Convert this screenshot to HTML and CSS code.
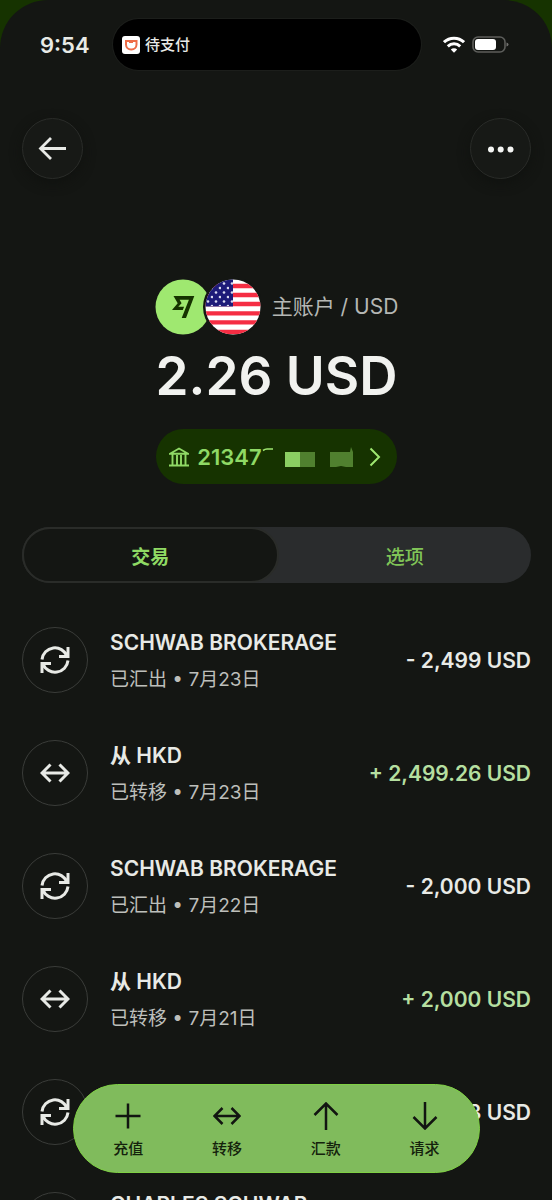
FILE: index.html
```html
<!DOCTYPE html>
<html lang="zh-CN">
<head>
<meta charset="utf-8">
<meta name="viewport" content="width=device-width, initial-scale=1">
<title>主账户 / USD</title>
<link rel="stylesheet" href="styles.css">
</head>
<body>
<svg class="sprite" aria-hidden="true">
  <symbol id="sync" viewBox="0 0 30 30"><path d="M2 14.500A13 13 0 0 1 27 11M28 2v9.500H19M28 15.500A13 13 0 0 1 3 19M2 28V18.500h9"/></symbol>
  <symbol id="swap" viewBox="0 0 30 20"><path d="M2 10h26M10.500 1.500L2 10l8.500 8.500M19.500 1.500L28 10l-8.500 8.500"/></symbol>
</svg>
<div class="app">
  <div class="status">
    <span class="time">9:54</span>
    <div class="island">
      <svg width="18" height="18" viewBox="0 0 18 18"><rect width="18" height="18" rx="3" fill="#fff"/><path d="M4 5h10.500v3.500a5 5 0 0 1-5 5h-.5a5 5 0 0 1-5-5z" fill="none" stroke="#ee6d48" stroke-width="2"/><path d="M7 6.500h4" stroke="#ee6d48" stroke-width="1"/></svg>
      <span>待支付</span>
    </div>
    <div class="signals">
      <svg width="22" height="17" viewBox="0 0 22 17" fill="none" stroke="#fff" stroke-width="3"><path d="M1 6.200a14.500 14.500 0 0 1 20 0"/><path d="M4.800 10.300a9 9 0 0 1 12.400 0"/><path d="M11 16.800l-3.200-3.300a4.600 4.600 0 0 1 6.400 0z" fill="#fff" stroke="none"/></svg>
      <svg width="37" height="17" viewBox="0 0 37 17"><rect x="1" y="1" width="32" height="15" rx="5" fill="none" stroke="#5d5e5b" stroke-width="1.600"/><rect x="3" y="3" width="21" height="11" rx="3" fill="#fff"/><path d="M34.500 6.500v4q2-.6 2-2t-2-2" fill="#70716e"/></svg>
    </div>
  </div>

  <header class="topbar">
    <button class="round" aria-label="返回"><svg width="30" height="26" viewBox="0 0 30 26" fill="none" stroke="#e8eae6" stroke-width="2.800"><path d="M28 12.500H3M13 2L2.500 12.500 13 23"/></svg></button>
    <button class="round" aria-label="更多"><svg width="28" height="8" viewBox="0 0 28 8" fill="#f4f5f3"><circle cx="4" cy="4.500" r="3"/><circle cx="13.700" cy="4.500" r="3"/><circle cx="23.500" cy="4.500" r="3"/></svg></button>
  </header>

  <section class="summary">
    <div class="account">
      <svg width="106" height="56" viewBox="0 0 106 56">
        <defs>
          <clipPath id="flag"><circle cx="78" cy="28" r="27.500"/></clipPath>
          <pattern id="stars" width="8" height="9" patternUnits="userSpaceOnUse" x="50" y="2"><circle cx="3" cy="2.500" r="1.300" fill="#d9daf0"/><circle cx="7" cy="7" r="1.300" fill="#d9daf0"/></pattern>
        </defs>
        <circle cx="28" cy="28" r="27.500" fill="#9fe870"/>
        <path fill="#163300" fill-rule="evenodd" d="M18.500 17h20.800l-8.300 22h-4.300l7.200-18.200h-9.300l2 3.400-3.300 3.500h5.800l-1.300 3.300H17l5.700-6.700z"/>
        <circle cx="78" cy="28" r="30" fill="#141613"/>
        <g clip-path="url(#flag)">
          <path fill="#fff" d="M50 0h56v56H50z"/>
          <path stroke="#f52d43" stroke-width="4.300" d="M50 7h56M50 16h56M50 25h56M50 34.300h56M50 43.300h56M50 53h56"/>
          <path fill="#1d1b79" d="M50 0h28v27.500H50z"/>
          <path fill="url(#stars)" d="M50 2h28v25H50z"/>
        </g>
      </svg>
      <span>主账户 / USD</span>
    </div>
    <h1 class="balance">2.26 USD</h1>
    <button class="details">
      <svg width="20" height="20" viewBox="0 0 20 20" fill="none" stroke="#8fd965" stroke-width="1.900"><path d="M1 6.800L10 1.500l9 5.300zM0 18.500h20M3.500 7v11M8 8v10M12 8v10M16.500 7v11"/></svg>
      <span class="number">21347</span>
      <svg class="mask" width="92" height="22" viewBox="0 0 92 22"><path d="M1 4.500q2-1.500 4-1.500h6" fill="none" stroke="#9fe870" stroke-width="1.600"/><path fill="#8bcf62" d="M23 6h15v15H23z"/><path fill="#50802f" d="M38 6h15v15H38zM68 6h20l1-5 2 5v15h-7l-5-1-5 1h-6z"/></svg>
      <svg width="12" height="20" viewBox="0 0 12 20" fill="none" stroke="#9fe870" stroke-width="2"><path d="M1.500 1.500L10 10l-8.500 8.500"/></svg>
    </button>
  </section>

  <div class="tabs" role="tablist">
    <button class="tab selected" role="tab" aria-selected="true">交易</button>
    <button class="tab" role="tab" aria-selected="false">选项</button>
  </div>

  <ul class="list">
    <li class="row">
      <span class="badge"><svg width="30" height="30"><use href="#sync"/></svg></span>
      <div class="info"><p class="name">SCHWAB BROKERAGE</p><p class="meta">已汇出 • 7月23日</p></div>
      <span class="amount">- 2,499 USD</span>
    </li>
    <li class="row">
      <span class="badge"><svg width="30" height="20"><use href="#swap"/></svg></span>
      <div class="info"><p class="name">从 HKD</p><p class="meta">已转移 • 7月23日</p></div>
      <span class="amount plus">+ 2,499.26 USD</span>
    </li>
    <li class="row">
      <span class="badge"><svg width="30" height="30"><use href="#sync"/></svg></span>
      <div class="info"><p class="name">SCHWAB BROKERAGE</p><p class="meta">已汇出 • 7月22日</p></div>
      <span class="amount">- 2,000 USD</span>
    </li>
    <li class="row">
      <span class="badge"><svg width="30" height="20"><use href="#swap"/></svg></span>
      <div class="info"><p class="name">从 HKD</p><p class="meta">已转移 • 7月21日</p></div>
      <span class="amount plus">+ 2,000 USD</span>
    </li>
    <li class="row">
      <span class="badge"><svg width="30" height="30"><use href="#sync"/></svg></span>
      <div class="info"></div>
      <span class="amount">3 USD</span>
    </li>
    <li class="row compact">
      <span class="badge"></span>
      <div class="info"><p class="name">CHARLES SCHWAB</p></div>
    </li>
  </ul>

  <nav class="actions">
    <button class="action"><svg width="28" height="28" viewBox="0 0 28 28"><path d="M14 1.500v25M1.500 14h25"/></svg>充值</button>
    <button class="action"><svg width="28" height="28" viewBox="0 0 28 28"><path d="M1.500 14h25M9.500 6l-8 8 8 8M18.500 6l8 8-8 8"/></svg>转移</button>
    <button class="action"><svg width="28" height="28" viewBox="0 0 28 28"><path d="M14 28V2M2.500 13L14 1.500 25.500 13"/></svg>汇款</button>
    <button class="action"><svg width="28" height="28" viewBox="0 0 28 28"><path d="M14 0v26M2.500 15L14 26.500 25.500 15"/></svg>请求</button>
  </nav>
</div>
</body>
</html>
```

FILE: styles.css
```css
* { box-sizing: border-box; }

body {
  margin: 0;
  background: #163300;
  color: #e8eae6;
  font-family: Inter, "Noto Sans CJK SC", sans-serif;
}

button {
  border: 0;
  padding: 0;
  background: none;
  color: inherit;
  font: inherit;
  cursor: pointer;
}

svg { display: block; flex: none; }
.sprite { position: absolute; width: 0; height: 0; }

.app {
  position: relative;
  height: 100vh;
  overflow: hidden;
  padding: 19px 21px 0 22px;
  border-radius: 48px 48px 0 0;
  background: #141613;
}

.status {
  display: flex;
  align-items: center;
  justify-content: space-between;
  padding: 0 22px 0 18px;
}

.time { width: 50px; font-size: 22px; font-weight: 600; }

.island {
  display: flex;
  flex: 1;
  align-items: center;
  gap: 5px;
  height: 51px;
  margin: 0 22px 0 23px;
  padding-left: 9px;
  border-radius: 26px;
  background: #000;
  box-shadow: 0 0 0 1px #1c1e1b;
  font-size: 15px;
  font-weight: 500;
  line-height: 20px;
}

.signals { display: flex; align-items: center; gap: 7px; }

.topbar { display: flex; justify-content: space-between; margin-top: 48px; }

.round {
  display: grid;
  place-items: center;
  width: 61px;
  height: 61px;
  border: 1px solid #2a2c29;
  border-radius: 50%;
  background: #171916;
  box-shadow: 0 4px 12px #10120f;
}

.summary { display: flex; flex-direction: column; align-items: center; margin-top: 100px; }

.account {
  display: flex;
  align-items: center;
  gap: 11px;
  color: #b5b7b4;
  font-size: 21px;
  line-height: 56px;
}

.balance {
  margin: 8px 0 0;
  color: #f1f2ef;
  font-size: 53px;
  font-weight: 600;
  line-height: 66px;
}

.details {
  display: flex;
  align-items: center;
  height: 55px;
  margin-top: 20px;
  padding: 0 16px 0 13px;
  border-radius: 28px;
  background: #163300;
  color: #8fd965;
}

.number { margin-left: 8px; font-size: 22px; font-weight: 600; line-height: 24px; }
.mask { margin-right: 15px; }

.tabs {
  display: flex;
  height: 56px;
  margin-top: 43px;
  border-radius: 28px;
  background: #2a2c2d;
}

.tab { flex: 1; color: #80c457; font-size: 19px; font-weight: 500; }

.tab.selected {
  border: 2px solid #2a2c29;
  border-radius: 28px;
  background: #141613;
  color: #8fda64;
  font-weight: 700;
}

.list {
  display: flex;
  flex-direction: column;
  gap: 47px;
  margin: 44px 0 0;
  padding: 0;
  list-style: none;
}

.row { display: flex; align-items: center; gap: 22px; height: 66px; }

.badge {
  display: grid;
  flex: none;
  place-items: center;
  width: 66px;
  height: 66px;
  border: 1px solid #3a3c39;
  border-radius: 50%;
}

.badge svg { fill: none; stroke: #e8eae6; stroke-width: 3; }

.info { flex: 1; align-self: flex-start; }
.info p { margin: 0; white-space: nowrap; }
.info .name { font-size: 21px; font-weight: 600; line-height: 32px; }
.info .meta { margin-top: 5px; color: #bdbfbb; font-size: 19px; line-height: 32px; }
.compact .info .name { line-height: 26px; }

.amount { font-size: 21px; font-weight: 600; white-space: nowrap; }
.plus { color: #b5dfa0; }

.actions {
  position: absolute;
  right: 72px;
  bottom: 27px;
  left: 73px;
  display: flex;
  height: 89px;
  padding: 4px 5px 0;
  border: 1px solid #7fd044;
  border-radius: 45px;
  background: #80bb5c;
}

.action {
  display: flex;
  flex: 1;
  flex-direction: column;
  align-items: center;
  justify-content: center;
  gap: 8px;
  color: #14220c;
  font-size: 15px;
  font-weight: 500;
  line-height: 22px;
}

.action svg { fill: none; stroke: #121511; stroke-width: 2.5; }
```
